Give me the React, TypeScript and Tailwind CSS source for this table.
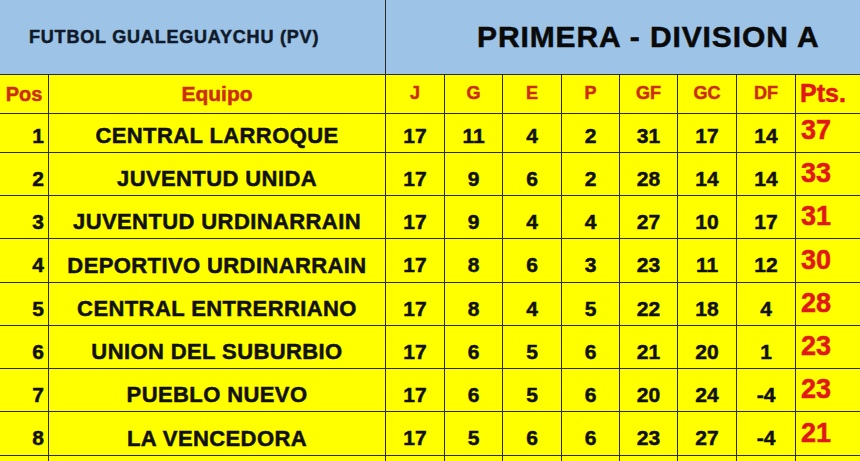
import React from "react";

const rows = [
  [1, "CENTRAL LARROQUE", 17, 11, 4, 2, 31, 17, 14, 37],
  [2, "JUVENTUD UNIDA", 17, 9, 6, 2, 28, 14, 14, 33],
  [3, "JUVENTUD URDINARRAIN", 17, 9, 4, 4, 27, 10, 17, 31],
  [4, "DEPORTIVO URDINARRAIN", 17, 8, 6, 3, 23, 11, 12, 30],
  [5, "CENTRAL ENTRERRIANO", 17, 8, 4, 5, 22, 18, 4, 28],
  [6, "UNION DEL SUBURBIO", 17, 6, 5, 6, 21, 20, 1, 23],
  [7, "PUEBLO NUEVO", 17, 6, 5, 6, 20, 24, -4, 23],
  [8, "LA VENCEDORA", 17, 5, 6, 6, 23, 27, -4, 21],
];

const heights = ["h-[43px]", "h-[43px]", "h-[43px]", "h-[44px]", "h-[43px]", "h-[43px]", "h-[43px]", "h-[44px]"];

const grid =
  "grid grid-cols-[49px_337px_59px_58px_59px_58px_58px_59px_59px_64px]";
const cell = "border-r border-b border-[#2a2a2a] flex items-center";

export default function App() {
  return (
    <div
      className="w-[860px] h-[461px] overflow-hidden bg-[#ffff00] font-bold [-webkit-text-stroke-width:0.5px]"
      style={{ fontFamily: '"Liberation Sans", Arial, sans-serif' }}
    >
      <div className="flex h-[75px] bg-[#9dc3e6] border-b border-[#2a2a2a]">
        <div className="w-[386px] border-r border-[#2a2a2a] flex items-center pl-[29px] pt-[1px] text-[18px] tracking-[0.8px] text-[#0f1a2a] whitespace-nowrap">
          FUTBOL GUALEGUAYCHU (PV)
        </div>
        <div className="flex-1 flex items-center pl-[91px] pb-[2px] text-[30px] tracking-[0.9px] text-[#0a0a0a] whitespace-nowrap">
          PRIMERA - DIVISION A
        </div>
      </div>
      <div className={`${grid} h-[35px] text-[#cc2e0c]`}>
        <div className={`${cell} justify-center text-[20px]`}>Pos</div>
        <div className={`${cell} justify-center text-[21px]`}>Equipo</div>
        {["J", "G", "E", "P", "GF", "GC", "DF"].map((h) => (
          <div key={h} className={`${cell} justify-center text-[18px]`}>
            {h}
          </div>
        ))}
        <div className={`${cell} justify-start pl-[4px] text-[25px] text-[#e01818] border-r-0`}>Pts.</div>
      </div>
      {rows.map((r, i) => (
        <div key={i} className={`${grid} ${heights[i]} text-[#111]`}>
          <div className={`${cell} justify-end pr-[4px] text-[21px] pt-[9px]`}>{r[0]}</div>
          <div className={`${cell} justify-center text-[22px] tracking-[0.4px] pt-[9px] whitespace-nowrap`}>{r[1]}</div>
          {r.slice(2, 9).map((v, j) => (
            <div key={j} className={`${cell} justify-center text-[21px] pt-[9px]`}>
              {v}
            </div>
          ))}
          <div className={`${cell} justify-start pl-[5px] text-[27px] text-[#e01818] border-r-0 pb-[1px]`}>
            {r[9]}
          </div>
        </div>
      ))}
      <div className={`${grid} h-[10px]`}>
        {Array.from({ length: 10 }).map((_, j) => (
          <div key={j} className={`border-r border-[#2a2a2a] ${j === 9 ? "border-r-0" : ""}`} />
        ))}
      </div>
    </div>
  );
}
